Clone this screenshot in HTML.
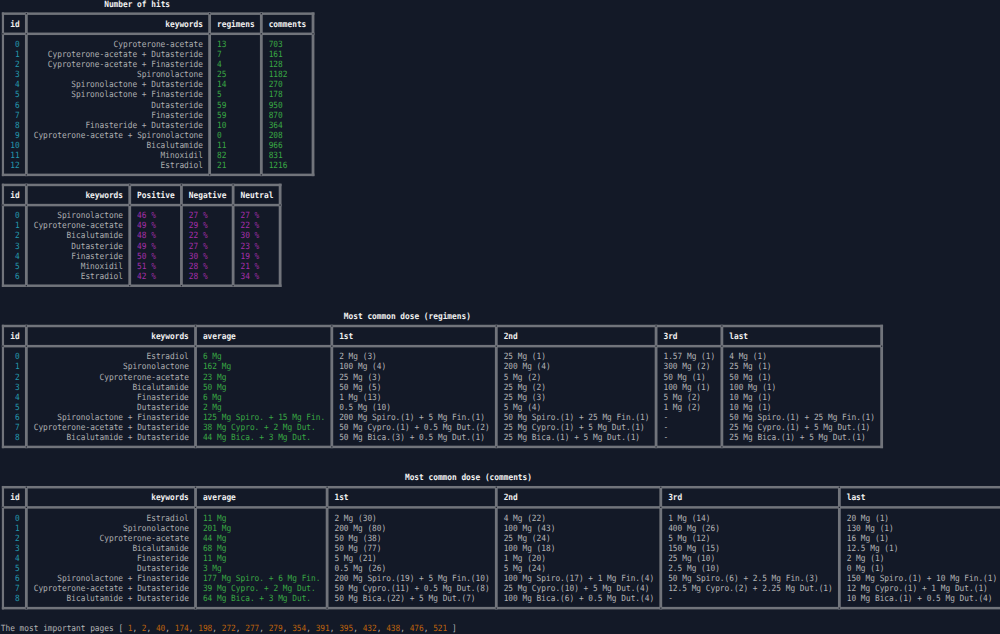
<!DOCTYPE html>
<html lang="en"><head><meta charset="utf-8"><title>terminal report</title>
<style>
html,body{margin:0;padding:0;background:#131927;}
#scr{position:relative;width:1000px;height:634px;overflow:hidden;background:#131927;font-family:"DejaVu Sans Mono","Liberation Mono",monospace;font-size:7.82px;line-height:9px;}
#scr span{position:absolute;white-space:pre;height:9px;transform:scaleY(1.1);transform-origin:0 7px;}
#scr b{font-weight:bold;}
#scr svg{position:absolute;left:0;top:0;}
</style></head><body>
<div id="scr">
<svg width="1000" height="634" viewBox="0 0 1000 634" shape-rendering="geometricPrecision">
<g fill="#71747b">
<rect x="1.85" y="12.404" width="312.567" height="2.5"/>
<rect x="1.85" y="32.556" width="312.567" height="2.5"/>
<rect x="1.85" y="173.62" width="312.567" height="2.5"/>
<rect x="1.85" y="183.696" width="279.67" height="2.5"/>
<rect x="1.85" y="203.848" width="279.67" height="2.5"/>
<rect x="1.85" y="284.456" width="279.67" height="2.5"/>
<rect x="1.85" y="324.76" width="881.206" height="2.5"/>
<rect x="1.85" y="344.912" width="881.206" height="2.5"/>
<rect x="1.85" y="445.672" width="881.206" height="2.5"/>
<rect x="1.85" y="485.976" width="1003.393" height="2.5"/>
<rect x="1.85" y="506.128" width="1003.393" height="2.5"/>
<rect x="1.85" y="606.888" width="1003.393" height="2.5"/>
<rect x="1.85" y="12.404" width="2.2" height="163.716"/>
<rect x="24.947" y="12.404" width="2.8" height="163.716"/>
<rect x="208.228" y="12.404" width="2.8" height="163.716"/>
<rect x="259.922" y="12.404" width="2.8" height="163.716"/>
<rect x="311.617" y="12.404" width="2.8" height="163.716"/>
<rect x="1.85" y="183.696" width="2.2" height="103.26"/>
<rect x="24.947" y="183.696" width="2.8" height="103.26"/>
<rect x="128.336" y="183.696" width="2.8" height="103.26"/>
<rect x="180.031" y="183.696" width="2.8" height="103.26"/>
<rect x="231.725" y="183.696" width="2.8" height="103.26"/>
<rect x="278.72" y="183.696" width="2.8" height="103.26"/>
<rect x="1.85" y="324.76" width="2.2" height="123.412"/>
<rect x="24.947" y="324.76" width="2.8" height="123.412"/>
<rect x="194.129" y="324.76" width="2.8" height="123.412"/>
<rect x="330.415" y="324.76" width="2.8" height="123.412"/>
<rect x="494.897" y="324.76" width="2.8" height="123.412"/>
<rect x="654.68" y="324.76" width="2.8" height="123.412"/>
<rect x="720.473" y="324.76" width="2.8" height="123.412"/>
<rect x="880.256" y="324.76" width="2.8" height="123.412"/>
<rect x="1.85" y="485.976" width="2.2" height="123.412"/>
<rect x="24.947" y="485.976" width="2.8" height="123.412"/>
<rect x="194.129" y="485.976" width="2.8" height="123.412"/>
<rect x="325.715" y="485.976" width="2.8" height="123.412"/>
<rect x="494.897" y="485.976" width="2.8" height="123.412"/>
<rect x="659.38" y="485.976" width="2.8" height="123.412"/>
<rect x="837.961" y="485.976" width="2.8" height="123.412"/>
<rect x="1002.443" y="485.976" width="2.8" height="123.412"/>
</g>
<g fill="#1b1f2c">
<rect x="2.25" y="33.206" width="1.2" height="1.2"/>
<rect x="25.747" y="33.206" width="1.2" height="1.2"/>
<rect x="209.028" y="33.206" width="1.2" height="1.2"/>
<rect x="260.722" y="33.206" width="1.2" height="1.2"/>
<rect x="312.417" y="33.206" width="1.2" height="1.2"/>
<rect x="25.747" y="13.054" width="1.2" height="1.2"/>
<rect x="25.747" y="174.27" width="1.2" height="1.2"/>
<rect x="209.028" y="13.054" width="1.2" height="1.2"/>
<rect x="209.028" y="174.27" width="1.2" height="1.2"/>
<rect x="260.722" y="13.054" width="1.2" height="1.2"/>
<rect x="260.722" y="174.27" width="1.2" height="1.2"/>
<rect x="2.25" y="204.498" width="1.2" height="1.2"/>
<rect x="25.747" y="204.498" width="1.2" height="1.2"/>
<rect x="129.136" y="204.498" width="1.2" height="1.2"/>
<rect x="180.831" y="204.498" width="1.2" height="1.2"/>
<rect x="232.525" y="204.498" width="1.2" height="1.2"/>
<rect x="279.52" y="204.498" width="1.2" height="1.2"/>
<rect x="25.747" y="184.346" width="1.2" height="1.2"/>
<rect x="25.747" y="285.106" width="1.2" height="1.2"/>
<rect x="129.136" y="184.346" width="1.2" height="1.2"/>
<rect x="129.136" y="285.106" width="1.2" height="1.2"/>
<rect x="180.831" y="184.346" width="1.2" height="1.2"/>
<rect x="180.831" y="285.106" width="1.2" height="1.2"/>
<rect x="232.525" y="184.346" width="1.2" height="1.2"/>
<rect x="232.525" y="285.106" width="1.2" height="1.2"/>
<rect x="2.25" y="345.562" width="1.2" height="1.2"/>
<rect x="25.747" y="345.562" width="1.2" height="1.2"/>
<rect x="194.929" y="345.562" width="1.2" height="1.2"/>
<rect x="331.215" y="345.562" width="1.2" height="1.2"/>
<rect x="495.697" y="345.562" width="1.2" height="1.2"/>
<rect x="655.48" y="345.562" width="1.2" height="1.2"/>
<rect x="721.273" y="345.562" width="1.2" height="1.2"/>
<rect x="881.056" y="345.562" width="1.2" height="1.2"/>
<rect x="25.747" y="325.41" width="1.2" height="1.2"/>
<rect x="25.747" y="446.322" width="1.2" height="1.2"/>
<rect x="194.929" y="325.41" width="1.2" height="1.2"/>
<rect x="194.929" y="446.322" width="1.2" height="1.2"/>
<rect x="331.215" y="325.41" width="1.2" height="1.2"/>
<rect x="331.215" y="446.322" width="1.2" height="1.2"/>
<rect x="495.697" y="325.41" width="1.2" height="1.2"/>
<rect x="495.697" y="446.322" width="1.2" height="1.2"/>
<rect x="655.48" y="325.41" width="1.2" height="1.2"/>
<rect x="655.48" y="446.322" width="1.2" height="1.2"/>
<rect x="721.273" y="325.41" width="1.2" height="1.2"/>
<rect x="721.273" y="446.322" width="1.2" height="1.2"/>
<rect x="2.25" y="506.778" width="1.2" height="1.2"/>
<rect x="25.747" y="506.778" width="1.2" height="1.2"/>
<rect x="194.929" y="506.778" width="1.2" height="1.2"/>
<rect x="326.515" y="506.778" width="1.2" height="1.2"/>
<rect x="495.697" y="506.778" width="1.2" height="1.2"/>
<rect x="660.18" y="506.778" width="1.2" height="1.2"/>
<rect x="838.761" y="506.778" width="1.2" height="1.2"/>
<rect x="1003.243" y="506.778" width="1.2" height="1.2"/>
<rect x="25.747" y="486.626" width="1.2" height="1.2"/>
<rect x="25.747" y="607.538" width="1.2" height="1.2"/>
<rect x="194.929" y="486.626" width="1.2" height="1.2"/>
<rect x="194.929" y="607.538" width="1.2" height="1.2"/>
<rect x="326.515" y="486.626" width="1.2" height="1.2"/>
<rect x="326.515" y="607.538" width="1.2" height="1.2"/>
<rect x="495.697" y="486.626" width="1.2" height="1.2"/>
<rect x="495.697" y="607.538" width="1.2" height="1.2"/>
<rect x="660.18" y="486.626" width="1.2" height="1.2"/>
<rect x="660.18" y="607.538" width="1.2" height="1.2"/>
<rect x="838.761" y="486.626" width="1.2" height="1.2"/>
<rect x="838.761" y="607.538" width="1.2" height="1.2"/>
</g>
</svg>
<span style="left:104.189px;top:0px;color:#f2f2f2"><b>Number of hits</b></span>
<span style="left:10.199px;top:20px;color:#f2f2f2"><b>id</b></span>
<span style="left:165.282px;top:20px;color:#f2f2f2"><b>keywords</b></span>
<span style="left:216.977px;top:20px;color:#f2f2f2"><b>regimens</b></span>
<span style="left:268.671px;top:20px;color:#f2f2f2"><b>comments</b></span>
<span style="left:14.898px;top:40px;color:#2497ad">0</span>
<span style="left:113.588px;top:40px;color:#aeafb1">Cyproterone-acetate</span>
<span style="left:216.977px;top:40px;color:#39a844">13</span>
<span style="left:268.671px;top:40px;color:#39a844">703</span>
<span style="left:14.898px;top:50px;color:#2497ad">1</span>
<span style="left:47.795px;top:50px;color:#aeafb1">Cyproterone-acetate + Dutasteride</span>
<span style="left:216.977px;top:50px;color:#39a844">7</span>
<span style="left:268.671px;top:50px;color:#39a844">161</span>
<span style="left:14.898px;top:60px;color:#2497ad">2</span>
<span style="left:47.795px;top:60px;color:#aeafb1">Cyproterone-acetate + Finasteride</span>
<span style="left:216.977px;top:60px;color:#39a844">4</span>
<span style="left:268.671px;top:60px;color:#39a844">128</span>
<span style="left:14.898px;top:70px;color:#2497ad">3</span>
<span style="left:137.085px;top:70px;color:#aeafb1">Spironolactone</span>
<span style="left:216.977px;top:70px;color:#39a844">25</span>
<span style="left:268.671px;top:70px;color:#39a844">1182</span>
<span style="left:14.898px;top:80px;color:#2497ad">4</span>
<span style="left:71.292px;top:80px;color:#aeafb1">Spironolactone + Dutasteride</span>
<span style="left:216.977px;top:80px;color:#39a844">14</span>
<span style="left:268.671px;top:80px;color:#39a844">270</span>
<span style="left:14.898px;top:90px;color:#2497ad">5</span>
<span style="left:71.292px;top:90px;color:#aeafb1">Spironolactone + Finasteride</span>
<span style="left:216.977px;top:90px;color:#39a844">5</span>
<span style="left:268.671px;top:90px;color:#39a844">178</span>
<span style="left:14.898px;top:101px;color:#2497ad">6</span>
<span style="left:151.184px;top:101px;color:#aeafb1">Dutasteride</span>
<span style="left:216.977px;top:101px;color:#39a844">59</span>
<span style="left:268.671px;top:101px;color:#39a844">950</span>
<span style="left:14.898px;top:111px;color:#2497ad">7</span>
<span style="left:151.184px;top:111px;color:#aeafb1">Finasteride</span>
<span style="left:216.977px;top:111px;color:#39a844">59</span>
<span style="left:268.671px;top:111px;color:#39a844">870</span>
<span style="left:14.898px;top:121px;color:#2497ad">8</span>
<span style="left:85.391px;top:121px;color:#aeafb1">Finasteride + Dutasteride</span>
<span style="left:216.977px;top:121px;color:#39a844">10</span>
<span style="left:268.671px;top:121px;color:#39a844">364</span>
<span style="left:14.898px;top:131px;color:#2497ad">9</span>
<span style="left:33.696px;top:131px;color:#aeafb1">Cyproterone-acetate + Spironolactone</span>
<span style="left:216.977px;top:131px;color:#39a844">0</span>
<span style="left:268.671px;top:131px;color:#39a844">208</span>
<span style="left:10.199px;top:141px;color:#2497ad">10</span>
<span style="left:146.484px;top:141px;color:#aeafb1">Bicalutamide</span>
<span style="left:216.977px;top:141px;color:#39a844">11</span>
<span style="left:268.671px;top:141px;color:#39a844">966</span>
<span style="left:10.199px;top:151px;color:#2497ad">11</span>
<span style="left:160.583px;top:151px;color:#aeafb1">Minoxidil</span>
<span style="left:216.977px;top:151px;color:#39a844">82</span>
<span style="left:268.671px;top:151px;color:#39a844">831</span>
<span style="left:10.199px;top:161px;color:#2497ad">12</span>
<span style="left:160.583px;top:161px;color:#aeafb1">Estradiol</span>
<span style="left:216.977px;top:161px;color:#39a844">21</span>
<span style="left:268.671px;top:161px;color:#39a844">1216</span>
<span style="left:10.199px;top:191px;color:#f2f2f2"><b>id</b></span>
<span style="left:85.391px;top:191px;color:#f2f2f2"><b>keywords</b></span>
<span style="left:137.085px;top:191px;color:#f2f2f2"><b>Positive</b></span>
<span style="left:188.78px;top:191px;color:#f2f2f2"><b>Negative</b></span>
<span style="left:240.474px;top:191px;color:#f2f2f2"><b>Neutral</b></span>
<span style="left:14.898px;top:211px;color:#2497ad">0</span>
<span style="left:57.194px;top:211px;color:#aeafb1">Spironolactone</span>
<span style="left:137.085px;top:211px;color:#a42eab">46 %</span>
<span style="left:188.78px;top:211px;color:#a42eab">27 %</span>
<span style="left:240.474px;top:211px;color:#a42eab">27 %</span>
<span style="left:14.898px;top:221px;color:#2497ad">1</span>
<span style="left:33.696px;top:221px;color:#aeafb1">Cyproterone-acetate</span>
<span style="left:137.085px;top:221px;color:#a42eab">49 %</span>
<span style="left:188.78px;top:221px;color:#a42eab">29 %</span>
<span style="left:240.474px;top:221px;color:#a42eab">22 %</span>
<span style="left:14.898px;top:231px;color:#2497ad">2</span>
<span style="left:66.593px;top:231px;color:#aeafb1">Bicalutamide</span>
<span style="left:137.085px;top:231px;color:#a42eab">48 %</span>
<span style="left:188.78px;top:231px;color:#a42eab">22 %</span>
<span style="left:240.474px;top:231px;color:#a42eab">30 %</span>
<span style="left:14.898px;top:242px;color:#2497ad">3</span>
<span style="left:71.292px;top:242px;color:#aeafb1">Dutasteride</span>
<span style="left:137.085px;top:242px;color:#a42eab">49 %</span>
<span style="left:188.78px;top:242px;color:#a42eab">27 %</span>
<span style="left:240.474px;top:242px;color:#a42eab">23 %</span>
<span style="left:14.898px;top:252px;color:#2497ad">4</span>
<span style="left:71.292px;top:252px;color:#aeafb1">Finasteride</span>
<span style="left:137.085px;top:252px;color:#a42eab">50 %</span>
<span style="left:188.78px;top:252px;color:#a42eab">30 %</span>
<span style="left:240.474px;top:252px;color:#a42eab">19 %</span>
<span style="left:14.898px;top:262px;color:#2497ad">5</span>
<span style="left:80.691px;top:262px;color:#aeafb1">Minoxidil</span>
<span style="left:137.085px;top:262px;color:#a42eab">51 %</span>
<span style="left:188.78px;top:262px;color:#a42eab">28 %</span>
<span style="left:240.474px;top:262px;color:#a42eab">21 %</span>
<span style="left:14.898px;top:272px;color:#2497ad">6</span>
<span style="left:80.691px;top:272px;color:#aeafb1">Estradiol</span>
<span style="left:137.085px;top:272px;color:#a42eab">42 %</span>
<span style="left:188.78px;top:272px;color:#a42eab">28 %</span>
<span style="left:240.474px;top:272px;color:#a42eab">34 %</span>
<span style="left:343.863px;top:312px;color:#f2f2f2"><b>Most common dose (regimens)</b></span>
<span style="left:10.199px;top:332px;color:#f2f2f2"><b>id</b></span>
<span style="left:151.184px;top:332px;color:#f2f2f2"><b>keywords</b></span>
<span style="left:202.879px;top:332px;color:#f2f2f2"><b>average</b></span>
<span style="left:339.164px;top:332px;color:#f2f2f2"><b>1st</b></span>
<span style="left:503.646px;top:332px;color:#f2f2f2"><b>2nd</b></span>
<span style="left:663.429px;top:332px;color:#f2f2f2"><b>3rd</b></span>
<span style="left:729.222px;top:332px;color:#f2f2f2"><b>last</b></span>
<span style="left:14.898px;top:352px;color:#2497ad">0</span>
<span style="left:146.484px;top:352px;color:#aeafb1">Estradiol</span>
<span style="left:202.879px;top:352px;color:#39a844">6 Mg</span>
<span style="left:339.164px;top:352px;color:#b3b4b6">2 Mg (3)</span>
<span style="left:503.646px;top:352px;color:#b3b4b6">25 Mg (1)</span>
<span style="left:663.429px;top:352px;color:#b3b4b6">1.57 Mg (1)</span>
<span style="left:729.222px;top:352px;color:#b3b4b6">4 Mg (1)</span>
<span style="left:14.898px;top:362px;color:#2497ad">1</span>
<span style="left:122.987px;top:362px;color:#aeafb1">Spironolactone</span>
<span style="left:202.879px;top:362px;color:#39a844">162 Mg</span>
<span style="left:339.164px;top:362px;color:#b3b4b6">100 Mg (4)</span>
<span style="left:503.646px;top:362px;color:#b3b4b6">200 Mg (4)</span>
<span style="left:663.429px;top:362px;color:#b3b4b6">300 Mg (2)</span>
<span style="left:729.222px;top:362px;color:#b3b4b6">25 Mg (1)</span>
<span style="left:14.898px;top:373px;color:#2497ad">2</span>
<span style="left:99.489px;top:373px;color:#aeafb1">Cyproterone-acetate</span>
<span style="left:202.879px;top:373px;color:#39a844">23 Mg</span>
<span style="left:339.164px;top:373px;color:#b3b4b6">25 Mg (3)</span>
<span style="left:503.646px;top:373px;color:#b3b4b6">5 Mg (2)</span>
<span style="left:663.429px;top:373px;color:#b3b4b6">50 Mg (1)</span>
<span style="left:729.222px;top:373px;color:#b3b4b6">50 Mg (1)</span>
<span style="left:14.898px;top:383px;color:#2497ad">3</span>
<span style="left:132.386px;top:383px;color:#aeafb1">Bicalutamide</span>
<span style="left:202.879px;top:383px;color:#39a844">50 Mg</span>
<span style="left:339.164px;top:383px;color:#b3b4b6">50 Mg (5)</span>
<span style="left:503.646px;top:383px;color:#b3b4b6">25 Mg (2)</span>
<span style="left:663.429px;top:383px;color:#b3b4b6">100 Mg (1)</span>
<span style="left:729.222px;top:383px;color:#b3b4b6">100 Mg (1)</span>
<span style="left:14.898px;top:393px;color:#2497ad">4</span>
<span style="left:137.085px;top:393px;color:#aeafb1">Finasteride</span>
<span style="left:202.879px;top:393px;color:#39a844">6 Mg</span>
<span style="left:339.164px;top:393px;color:#b3b4b6">1 Mg (13)</span>
<span style="left:503.646px;top:393px;color:#b3b4b6">25 Mg (3)</span>
<span style="left:663.429px;top:393px;color:#b3b4b6">5 Mg (2)</span>
<span style="left:729.222px;top:393px;color:#b3b4b6">10 Mg (1)</span>
<span style="left:14.898px;top:403px;color:#2497ad">5</span>
<span style="left:137.085px;top:403px;color:#aeafb1">Dutasteride</span>
<span style="left:202.879px;top:403px;color:#39a844">2 Mg</span>
<span style="left:339.164px;top:403px;color:#b3b4b6">0.5 Mg (10)</span>
<span style="left:503.646px;top:403px;color:#b3b4b6">5 Mg (4)</span>
<span style="left:663.429px;top:403px;color:#b3b4b6">1 Mg (2)</span>
<span style="left:729.222px;top:403px;color:#b3b4b6">10 Mg (1)</span>
<span style="left:14.898px;top:413px;color:#2497ad">6</span>
<span style="left:57.194px;top:413px;color:#aeafb1">Spironolactone + Finasteride</span>
<span style="left:202.879px;top:413px;color:#39a844">125 Mg Spiro. + 15 Mg Fin.</span>
<span style="left:339.164px;top:413px;color:#b3b4b6">200 Mg Spiro.(1) + 5 Mg Fin.(1)</span>
<span style="left:503.646px;top:413px;color:#b3b4b6">50 Mg Spiro.(1) + 25 Mg Fin.(1)</span>
<span style="left:663.429px;top:413px;color:#b3b4b6">-</span>
<span style="left:729.222px;top:413px;color:#b3b4b6">50 Mg Spiro.(1) + 25 Mg Fin.(1)</span>
<span style="left:14.898px;top:423px;color:#2497ad">7</span>
<span style="left:33.696px;top:423px;color:#aeafb1">Cyproterone-acetate + Dutasteride</span>
<span style="left:202.879px;top:423px;color:#39a844">38 Mg Cypro. + 2 Mg Dut.</span>
<span style="left:339.164px;top:423px;color:#b3b4b6">50 Mg Cypro.(1) + 0.5 Mg Dut.(2)</span>
<span style="left:503.646px;top:423px;color:#b3b4b6">25 Mg Cypro.(1) + 5 Mg Dut.(1)</span>
<span style="left:663.429px;top:423px;color:#b3b4b6">-</span>
<span style="left:729.222px;top:423px;color:#b3b4b6">25 Mg Cypro.(1) + 5 Mg Dut.(1)</span>
<span style="left:14.898px;top:433px;color:#2497ad">8</span>
<span style="left:66.593px;top:433px;color:#aeafb1">Bicalutamide + Dutasteride</span>
<span style="left:202.879px;top:433px;color:#39a844">44 Mg Bica. + 3 Mg Dut.</span>
<span style="left:339.164px;top:433px;color:#b3b4b6">50 Mg Bica.(3) + 0.5 Mg Dut.(1)</span>
<span style="left:503.646px;top:433px;color:#b3b4b6">25 Mg Bica.(1) + 5 Mg Dut.(1)</span>
<span style="left:663.429px;top:433px;color:#b3b4b6">-</span>
<span style="left:729.222px;top:433px;color:#b3b4b6">25 Mg Bica.(1) + 5 Mg Dut.(1)</span>
<span style="left:404.957px;top:473px;color:#f2f2f2"><b>Most common dose (comments)</b></span>
<span style="left:10.199px;top:493px;color:#f2f2f2"><b>id</b></span>
<span style="left:151.184px;top:493px;color:#f2f2f2"><b>keywords</b></span>
<span style="left:202.879px;top:493px;color:#f2f2f2"><b>average</b></span>
<span style="left:334.464px;top:493px;color:#f2f2f2"><b>1st</b></span>
<span style="left:503.646px;top:493px;color:#f2f2f2"><b>2nd</b></span>
<span style="left:668.129px;top:493px;color:#f2f2f2"><b>3rd</b></span>
<span style="left:846.71px;top:493px;color:#f2f2f2"><b>last</b></span>
<span style="left:14.898px;top:514px;color:#2497ad">0</span>
<span style="left:146.484px;top:514px;color:#aeafb1">Estradiol</span>
<span style="left:202.879px;top:514px;color:#39a844">11 Mg</span>
<span style="left:334.464px;top:514px;color:#b3b4b6">2 Mg (30)</span>
<span style="left:503.646px;top:514px;color:#b3b4b6">4 Mg (22)</span>
<span style="left:668.129px;top:514px;color:#b3b4b6">1 Mg (14)</span>
<span style="left:846.71px;top:514px;color:#b3b4b6">20 Mg (1)</span>
<span style="left:14.898px;top:524px;color:#2497ad">1</span>
<span style="left:122.987px;top:524px;color:#aeafb1">Spironolactone</span>
<span style="left:202.879px;top:524px;color:#39a844">201 Mg</span>
<span style="left:334.464px;top:524px;color:#b3b4b6">200 Mg (80)</span>
<span style="left:503.646px;top:524px;color:#b3b4b6">100 Mg (43)</span>
<span style="left:668.129px;top:524px;color:#b3b4b6">400 Mg (26)</span>
<span style="left:846.71px;top:524px;color:#b3b4b6">130 Mg (1)</span>
<span style="left:14.898px;top:534px;color:#2497ad">2</span>
<span style="left:99.489px;top:534px;color:#aeafb1">Cyproterone-acetate</span>
<span style="left:202.879px;top:534px;color:#39a844">44 Mg</span>
<span style="left:334.464px;top:534px;color:#b3b4b6">50 Mg (38)</span>
<span style="left:503.646px;top:534px;color:#b3b4b6">25 Mg (24)</span>
<span style="left:668.129px;top:534px;color:#b3b4b6">5 Mg (12)</span>
<span style="left:846.71px;top:534px;color:#b3b4b6">16 Mg (1)</span>
<span style="left:14.898px;top:544px;color:#2497ad">3</span>
<span style="left:132.386px;top:544px;color:#aeafb1">Bicalutamide</span>
<span style="left:202.879px;top:544px;color:#39a844">68 Mg</span>
<span style="left:334.464px;top:544px;color:#b3b4b6">50 Mg (77)</span>
<span style="left:503.646px;top:544px;color:#b3b4b6">100 Mg (18)</span>
<span style="left:668.129px;top:544px;color:#b3b4b6">150 Mg (15)</span>
<span style="left:846.71px;top:544px;color:#b3b4b6">12.5 Mg (1)</span>
<span style="left:14.898px;top:554px;color:#2497ad">4</span>
<span style="left:137.085px;top:554px;color:#aeafb1">Finasteride</span>
<span style="left:202.879px;top:554px;color:#39a844">11 Mg</span>
<span style="left:334.464px;top:554px;color:#b3b4b6">5 Mg (21)</span>
<span style="left:503.646px;top:554px;color:#b3b4b6">1 Mg (20)</span>
<span style="left:668.129px;top:554px;color:#b3b4b6">25 Mg (10)</span>
<span style="left:846.71px;top:554px;color:#b3b4b6">2 Mg (1)</span>
<span style="left:14.898px;top:564px;color:#2497ad">5</span>
<span style="left:137.085px;top:564px;color:#aeafb1">Dutasteride</span>
<span style="left:202.879px;top:564px;color:#39a844">3 Mg</span>
<span style="left:334.464px;top:564px;color:#b3b4b6">0.5 Mg (26)</span>
<span style="left:503.646px;top:564px;color:#b3b4b6">5 Mg (24)</span>
<span style="left:668.129px;top:564px;color:#b3b4b6">2.5 Mg (10)</span>
<span style="left:846.71px;top:564px;color:#b3b4b6">0 Mg (1)</span>
<span style="left:14.898px;top:574px;color:#2497ad">6</span>
<span style="left:57.194px;top:574px;color:#aeafb1">Spironolactone + Finasteride</span>
<span style="left:202.879px;top:574px;color:#39a844">177 Mg Spiro. + 6 Mg Fin.</span>
<span style="left:334.464px;top:574px;color:#b3b4b6">200 Mg Spiro.(19) + 5 Mg Fin.(10)</span>
<span style="left:503.646px;top:574px;color:#b3b4b6">100 Mg Spiro.(17) + 1 Mg Fin.(4)</span>
<span style="left:668.129px;top:574px;color:#b3b4b6">50 Mg Spiro.(6) + 2.5 Mg Fin.(3)</span>
<span style="left:846.71px;top:574px;color:#b3b4b6">150 Mg Spiro.(1) + 10 Mg Fin.(1)</span>
<span style="left:14.898px;top:584px;color:#2497ad">7</span>
<span style="left:33.696px;top:584px;color:#aeafb1">Cyproterone-acetate + Dutasteride</span>
<span style="left:202.879px;top:584px;color:#39a844">39 Mg Cypro. + 2 Mg Dut.</span>
<span style="left:334.464px;top:584px;color:#b3b4b6">50 Mg Cypro.(11) + 0.5 Mg Dut.(8)</span>
<span style="left:503.646px;top:584px;color:#b3b4b6">25 Mg Cypro.(10) + 5 Mg Dut.(4)</span>
<span style="left:668.129px;top:584px;color:#b3b4b6">12.5 Mg Cypro.(2) + 2.25 Mg Dut.(1)</span>
<span style="left:846.71px;top:584px;color:#b3b4b6">12 Mg Cypro.(1) + 1 Mg Dut.(1)</span>
<span style="left:14.898px;top:594px;color:#2497ad">8</span>
<span style="left:66.593px;top:594px;color:#aeafb1">Bicalutamide + Dutasteride</span>
<span style="left:202.879px;top:594px;color:#39a844">64 Mg Bica. + 3 Mg Dut.</span>
<span style="left:334.464px;top:594px;color:#b3b4b6">50 Mg Bica.(22) + 5 Mg Dut.(7)</span>
<span style="left:503.646px;top:594px;color:#b3b4b6">100 Mg Bica.(6) + 0.5 Mg Dut.(4)</span>
<span style="left:668.129px;top:594px;color:#b3b4b6">-</span>
<span style="left:846.71px;top:594px;color:#b3b4b6">10 Mg Bica.(1) + 0.5 Mg Dut.(4)</span>
<span style="left:0.8px;top:624px;color:#b3b4b6">The most important pages [</span>
<span style="left:127.686px;top:624px;color:#bd620d">1</span>
<span style="left:132.386px;top:624px;color:#b3b4b6">,</span>
<span style="left:141.785px;top:624px;color:#bd620d">2</span>
<span style="left:146.484px;top:624px;color:#b3b4b6">,</span>
<span style="left:155.883px;top:624px;color:#bd620d">40</span>
<span style="left:165.282px;top:624px;color:#b3b4b6">,</span>
<span style="left:174.681px;top:624px;color:#bd620d">174</span>
<span style="left:188.78px;top:624px;color:#b3b4b6">,</span>
<span style="left:198.179px;top:624px;color:#bd620d">198</span>
<span style="left:212.278px;top:624px;color:#b3b4b6">,</span>
<span style="left:221.677px;top:624px;color:#bd620d">272</span>
<span style="left:235.775px;top:624px;color:#b3b4b6">,</span>
<span style="left:245.174px;top:624px;color:#bd620d">277</span>
<span style="left:259.272px;top:624px;color:#b3b4b6">,</span>
<span style="left:268.671px;top:624px;color:#bd620d">279</span>
<span style="left:282.77px;top:624px;color:#b3b4b6">,</span>
<span style="left:292.169px;top:624px;color:#bd620d">354</span>
<span style="left:306.267px;top:624px;color:#b3b4b6">,</span>
<span style="left:315.666px;top:624px;color:#bd620d">391</span>
<span style="left:329.765px;top:624px;color:#b3b4b6">,</span>
<span style="left:339.164px;top:624px;color:#bd620d">395</span>
<span style="left:353.262px;top:624px;color:#b3b4b6">,</span>
<span style="left:362.661px;top:624px;color:#bd620d">432</span>
<span style="left:376.76px;top:624px;color:#b3b4b6">,</span>
<span style="left:386.159px;top:624px;color:#bd620d">438</span>
<span style="left:400.257px;top:624px;color:#b3b4b6">,</span>
<span style="left:409.656px;top:624px;color:#bd620d">476</span>
<span style="left:423.755px;top:624px;color:#b3b4b6">,</span>
<span style="left:433.154px;top:624px;color:#bd620d">521</span>
<span style="left:451.952px;top:624px;color:#b3b4b6">]</span>
</div>
</body></html>
